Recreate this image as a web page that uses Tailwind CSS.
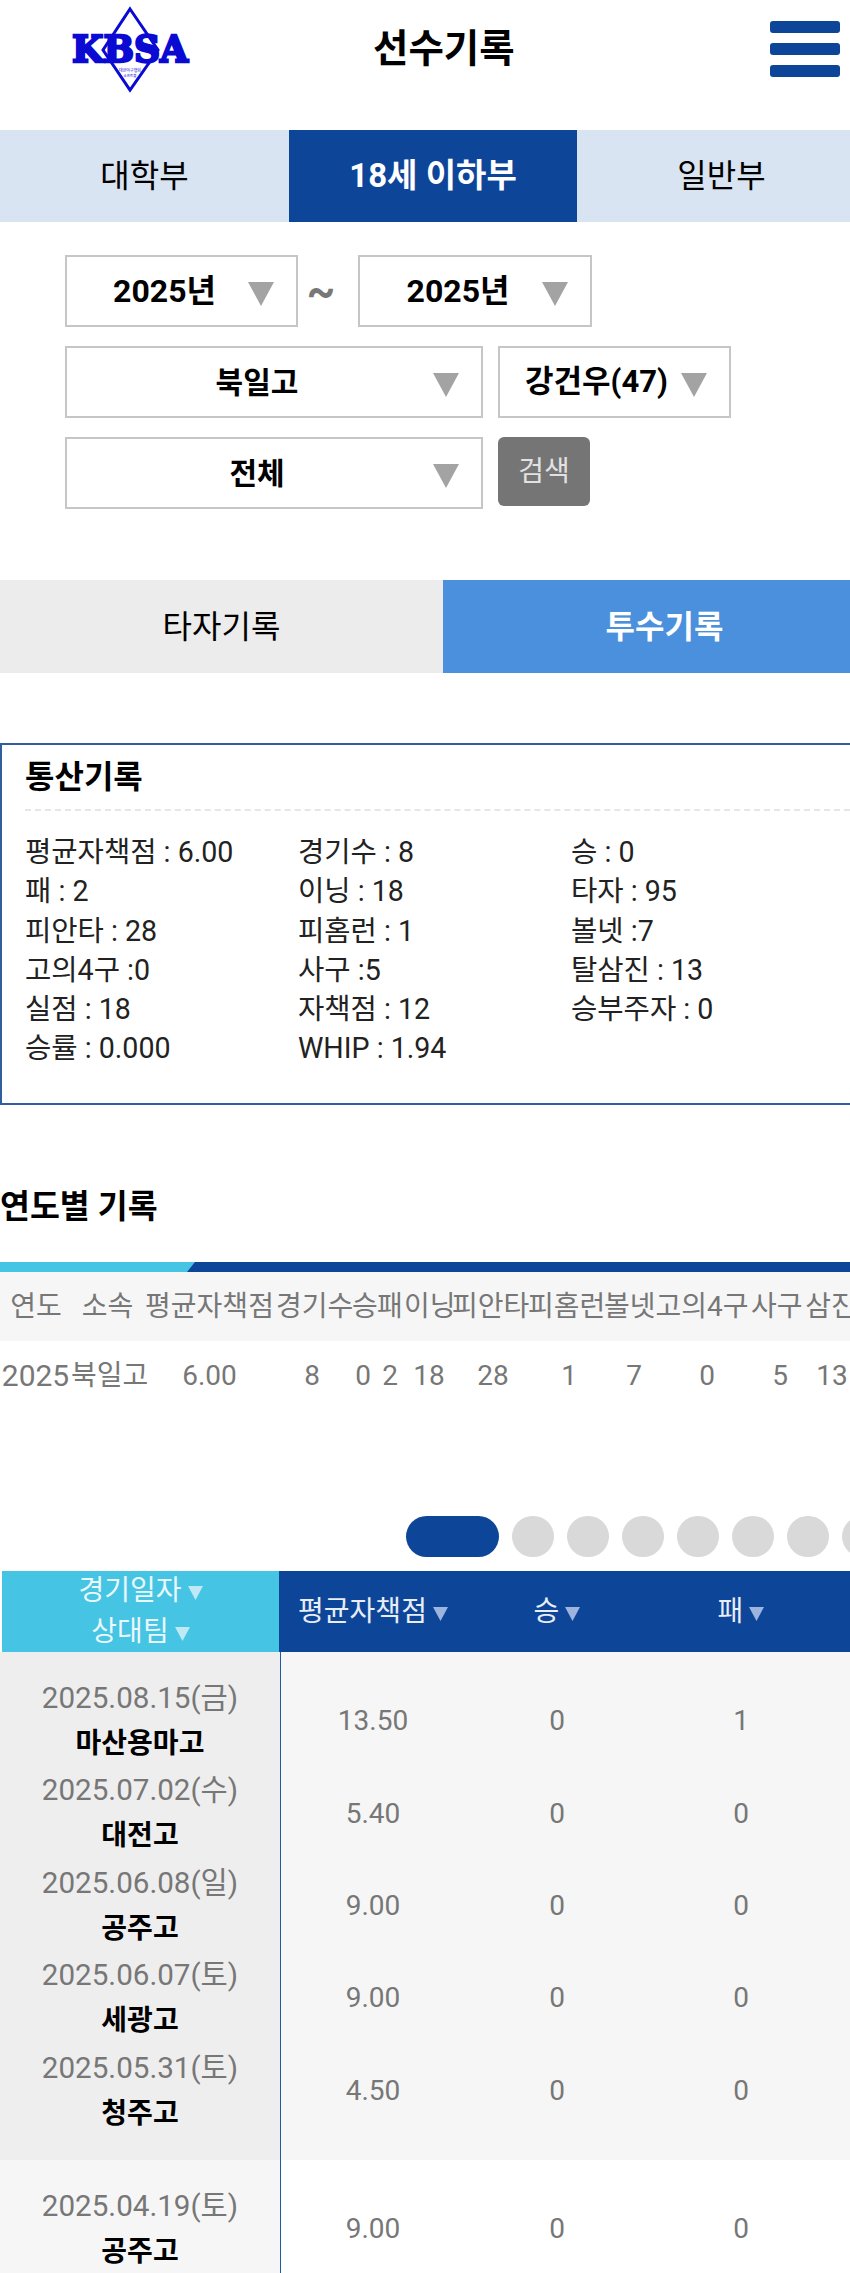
<!DOCTYPE html>
<html lang="ko">
<head>
	<meta charset="UTF-8">
	<meta name="viewport" content="width=device-width, initial-scale=1.0">
	<title>선수기록</title>
	<script src="https://cdn.jsdelivr.net/npm/@tailwindcss/browser@4"></script>
</head>
<body class="bg-white h-[2273px] overflow-hidden font-['Roboto','Noto_Sans_CJK_KR',sans-serif] text-black">
	<!-- header -->
	<header class="h-[98px] mb-[32px] flex items-center">
		<svg class="ml-[70px] w-[120px] h-[98px] shrink-0 overflow-visible" viewBox="0 0 120 98">
			<polygon points="60,9 88,50 60,90 33,50" fill="none" stroke="#0a0ad2" stroke-width="3"/>
			<text x="60" y="62" text-anchor="middle" textLength="116" lengthAdjust="spacingAndGlyphs" font-family="'DejaVu Serif'" font-weight="700" font-size="37" fill="#0a0ad2" stroke="#0a0ad2" stroke-width="2.4">KBSA</text>
			<text x="60" y="72" text-anchor="middle" font-family="'Noto Sans CJK KR'" font-size="4" fill="#0a0ad2">대한야구협회</text>
			<text x="60" y="77" text-anchor="middle" font-family="'Noto Sans CJK KR'" font-size="3.5" fill="#0a0ad2">소프트볼</text>
		</svg>
		<h1 class="ml-[183px] text-[38.5px] font-bold whitespace-nowrap leading-none">선수기록</h1>
		<div class="ml-auto mr-[10px] w-[70px] flex flex-col gap-[10px]">
			<div class="h-[12px] rounded-[3px] bg-[#0d4699]"></div>
			<div class="h-[12px] rounded-[3px] bg-[#0d4699]"></div>
			<div class="h-[12px] rounded-[3px] bg-[#0d4699]"></div>
		</div>
	</header>

	<!-- division tabs -->
	<nav class="h-[92px] grid grid-cols-[289px_288px_1fr] bg-[#d8e4f1] text-[32px]">
		<div class="flex items-center justify-center">대학부</div>
		<div class="flex items-center justify-center bg-[#0d4699] text-white font-bold text-[33px]">18세 이하부</div>
		<div class="flex items-center justify-center pl-[16px]">일반부</div>
	</nav>

	<!-- filters -->
	<section class="pt-[33px] pl-[65px] mb-[71px] flex flex-col gap-[19px] text-[30px] font-bold">
		<div class="flex items-center">
			<div class="w-[233px] h-[72px] border-2 border-[#c6c6c6] flex items-center pl-[14px]">
				<span class="flex-1 text-center text-[32px]">2025년</span>
				<svg class="w-[26px] h-[24px] mr-[22px] mt-[6px]" viewBox="0 0 26 24"><polygon points="0,0 26,0 13,24" fill="#a3a3a3"/></svg>
			</div>
			<span class="w-[60px] pr-[14px] text-center text-[#777777] text-[44px] leading-none">~</span>
			<div class="w-[234px] h-[72px] border-2 border-[#c6c6c6] flex items-center pl-[14px]">
				<span class="flex-1 text-center text-[32px]">2025년</span>
				<svg class="w-[26px] h-[24px] mr-[22px] mt-[6px]" viewBox="0 0 26 24"><polygon points="0,0 26,0 13,24" fill="#a3a3a3"/></svg>
			</div>
		</div>
		<div class="flex items-center gap-[15px]">
			<div class="w-[418px] h-[72px] border-2 border-[#c6c6c6] flex items-center pl-[14px]">
				<span class="flex-1 text-center">북일고</span>
				<svg class="w-[26px] h-[24px] mr-[22px] mt-[6px]" viewBox="0 0 26 24"><polygon points="0,0 26,0 13,24" fill="#a3a3a3"/></svg>
			</div>
			<div class="w-[233px] h-[72px] border-2 border-[#c6c6c6] flex items-center pl-[12px]">
				<span class="flex-1 text-center whitespace-nowrap text-[31px]">강건우(47)</span>
				<svg class="w-[26px] h-[24px] mr-[22px] mt-[6px]" viewBox="0 0 26 24"><polygon points="0,0 26,0 13,24" fill="#a3a3a3"/></svg>
			</div>
		</div>
		<div class="flex items-start gap-[15px]">
			<div class="w-[418px] h-[72px] border-2 border-[#c6c6c6] flex items-center pl-[14px]">
				<span class="flex-1 text-center">전체</span>
				<svg class="w-[26px] h-[24px] mr-[22px] mt-[6px]" viewBox="0 0 26 24"><polygon points="0,0 26,0 13,24" fill="#a3a3a3"/></svg>
			</div>
			<button class="w-[92px] h-[69px] rounded-[6px] bg-[#757575] text-[#e2e2e2] text-[28px] font-normal">검색</button>
		</div>
	</section>

	<!-- record type tabs -->
	<nav class="h-[93px] grid grid-cols-[443px_1fr] bg-[#ececec] text-[32px]">
		<div class="flex items-center justify-center">타자기록</div>
		<div class="flex items-center justify-center bg-[#4a90dc] text-white font-bold pl-[36px]">투수기록</div>
	</nav>

	<!-- career totals -->
	<section class="mt-[70px] h-[362px] border-2 border-r-0 border-[#2f5f9f] pl-[23px]">
		<h2 class="h-[64px] flex items-center text-[32px] font-bold">통산기록</h2>
		<div class="border-t-2 border-dashed border-[#e6e6e6]"></div>
		<div class="mt-[22px] grid grid-cols-[273px_273px_1fr] auto-rows-[39.2px] items-center text-[28.6px] text-[#222222] whitespace-nowrap">
			<div>평균자책점 : 6.00</div><div>경기수 : 8</div><div>승 : 0</div>
			<div>패 : 2</div><div>이닝 : 18</div><div>타자 : 95</div>
			<div>피안타 : 28</div><div>피홈런 : 1</div><div>볼넷 :7</div>
			<div>고의4구 :0</div><div>사구 :5</div><div>탈삼진 : 13</div>
			<div>실점 : 18</div><div>자책점 : 12</div><div>승부주자 : 0</div>
			<div>승률 : 0.000</div><div>WHIP : 1.94</div>
		</div>
	</section>

	<!-- yearly records -->
	<h2 class="mt-[75px] h-[54px] flex items-center text-[32.5px] font-bold">연도별 기록</h2>
	<div class="mt-[28px] h-[10px] bg-[#0d4699]">
		<div class="w-[195px] h-full bg-[#45c4e3] [clip-path:polygon(0_0,100%_0,187px_100%,0_100%)]"></div>
	</div>
	<div class="overflow-hidden text-[28px] text-[#777777] whitespace-nowrap">
		<div class="w-[860px] h-[69px] grid grid-cols-[72px_71px_133px_76px_24px_28px_48px_76px_76px_49px_98px_51px_58px] items-center text-center bg-[#f6f6f6]">
			<div>연도</div><div>소속</div><div>평균자책점</div><div>경기수</div><div>승</div><div>패</div><div>이닝</div><div>피안타</div><div>피홈런</div><div>볼넷</div><div>고의4구</div><div>사구</div><div>삼진</div>
		</div>
		<div class="w-[860px] h-[69px] grid grid-cols-[71px_72px_133px_72px_30px_24px_54px_74px_78px_52px_94px_52px_52px] items-center text-center">
			<div class="text-[30px]">2025</div><div>북일고</div><div>6.00</div><div>8</div><div>0</div><div>2</div><div>18</div><div>28</div><div>1</div><div>7</div><div>0</div><div>5</div><div>13</div>
		</div>
	</div>

	<!-- pager dots -->
	<div class="mt-[106px] pl-[406px] flex gap-[13px] overflow-hidden">
		<div class="w-[93px] h-[41px] shrink-0 rounded-full bg-[#0d4699]"></div>
		<div class="w-[42px] h-[41px] shrink-0 rounded-full bg-[#d9d9d9]"></div>
		<div class="w-[42px] h-[41px] shrink-0 rounded-full bg-[#d9d9d9]"></div>
		<div class="w-[42px] h-[41px] shrink-0 rounded-full bg-[#d9d9d9]"></div>
		<div class="w-[42px] h-[41px] shrink-0 rounded-full bg-[#d9d9d9]"></div>
		<div class="w-[42px] h-[41px] shrink-0 rounded-full bg-[#d9d9d9]"></div>
		<div class="w-[42px] h-[41px] shrink-0 rounded-full bg-[#d9d9d9]"></div>
		<div class="w-[42px] h-[41px] shrink-0 rounded-full bg-[#d9d9d9]"></div>
	</div>

	<!-- game log -->
	<div class="mt-[14px] h-[81px] flex text-[28px] pl-[2px]">
		<div class="w-[277px] bg-[#45c4e3] text-[#eaf8fc] flex flex-col items-center justify-center">
			<div class="h-[41px] flex items-center gap-[6px]">경기일자<svg class="w-[15px] h-[14px] mt-[4px]" viewBox="0 0 15 14"><polygon points="0,0 15,0 7.5,14" fill="#bfe9f4"/></svg></div>
			<div class="h-[41px] flex items-center gap-[6px]">상대팀<svg class="w-[15px] h-[14px] mt-[4px]" viewBox="0 0 15 14"><polygon points="0,0 15,0 7.5,14" fill="#bfe9f4"/></svg></div>
		</div>
		<div class="flex-1 bg-[#0d4699] text-[#e8edf6] pl-[2px] grid grid-cols-[184px_184px_184px_1fr]">
			<div class="flex items-center justify-center gap-[6px]">평균자책점<svg class="w-[15px] h-[14px] mt-[4px]" viewBox="0 0 15 14"><polygon points="0,0 15,0 7.5,14" fill="#9db4de"/></svg></div>
			<div class="flex items-center justify-center gap-[6px]">승<svg class="w-[15px] h-[14px] mt-[4px]" viewBox="0 0 15 14"><polygon points="0,0 15,0 7.5,14" fill="#9db4de"/></svg></div>
			<div class="flex items-center justify-center gap-[6px]">패<svg class="w-[15px] h-[14px] mt-[4px]" viewBox="0 0 15 14"><polygon points="0,0 15,0 7.5,14" fill="#9db4de"/></svg></div>
		</div>
	</div>

	<div class="flex text-[28px] text-[#777777] text-center">
		<div class="w-[281px] bg-[#eeeeee] border-r border-[#1f5aa6] py-[23px]">
			<div class="h-[46px] leading-[46px] text-[29.6px]">2025.08.15(금)</div><div class="h-[46.4px] leading-[46px] font-bold text-black">마산용마고</div>
			<div class="h-[46px] leading-[46px] text-[29.6px]">2025.07.02(수)</div><div class="h-[46.4px] leading-[46px] font-bold text-black">대전고</div>
			<div class="h-[46px] leading-[46px] text-[29.6px]">2025.06.08(일)</div><div class="h-[46.4px] leading-[46px] font-bold text-black">공주고</div>
			<div class="h-[46px] leading-[46px] text-[29.6px]">2025.06.07(토)</div><div class="h-[46.4px] leading-[46px] font-bold text-black">세광고</div>
			<div class="h-[46px] leading-[46px] text-[29.6px]">2025.05.31(토)</div><div class="h-[46.4px] leading-[46px] font-bold text-black">청주고</div>
		</div>
		<div class="flex-1 bg-[#f6f6f6] py-[23px] grid grid-cols-[184px_184px_184px_1fr] auto-rows-[92.4px] items-center">
			<div>13.50</div><div>0</div><div>1</div><div></div>
			<div>5.40</div><div>0</div><div>0</div><div></div>
			<div>9.00</div><div>0</div><div>0</div><div></div>
			<div>9.00</div><div>0</div><div>0</div><div></div>
			<div>4.50</div><div>0</div><div>0</div><div></div>
		</div>
	</div>
	<div class="flex text-[28px] text-[#777777] text-center">
		<div class="w-[281px] bg-[#f6f6f6] border-r border-[#1f5aa6] py-[23px]">
			<div class="h-[46px] leading-[46px] text-[29.6px]">2025.04.19(토)</div><div class="h-[46.4px] leading-[46px] font-bold text-black">공주고</div>
		</div>
		<div class="flex-1 py-[23px] grid grid-cols-[184px_184px_184px_1fr] auto-rows-[92.4px] items-center">
			<div>9.00</div><div>0</div><div>0</div><div></div>
		</div>
	</div>
</body>
</html>
